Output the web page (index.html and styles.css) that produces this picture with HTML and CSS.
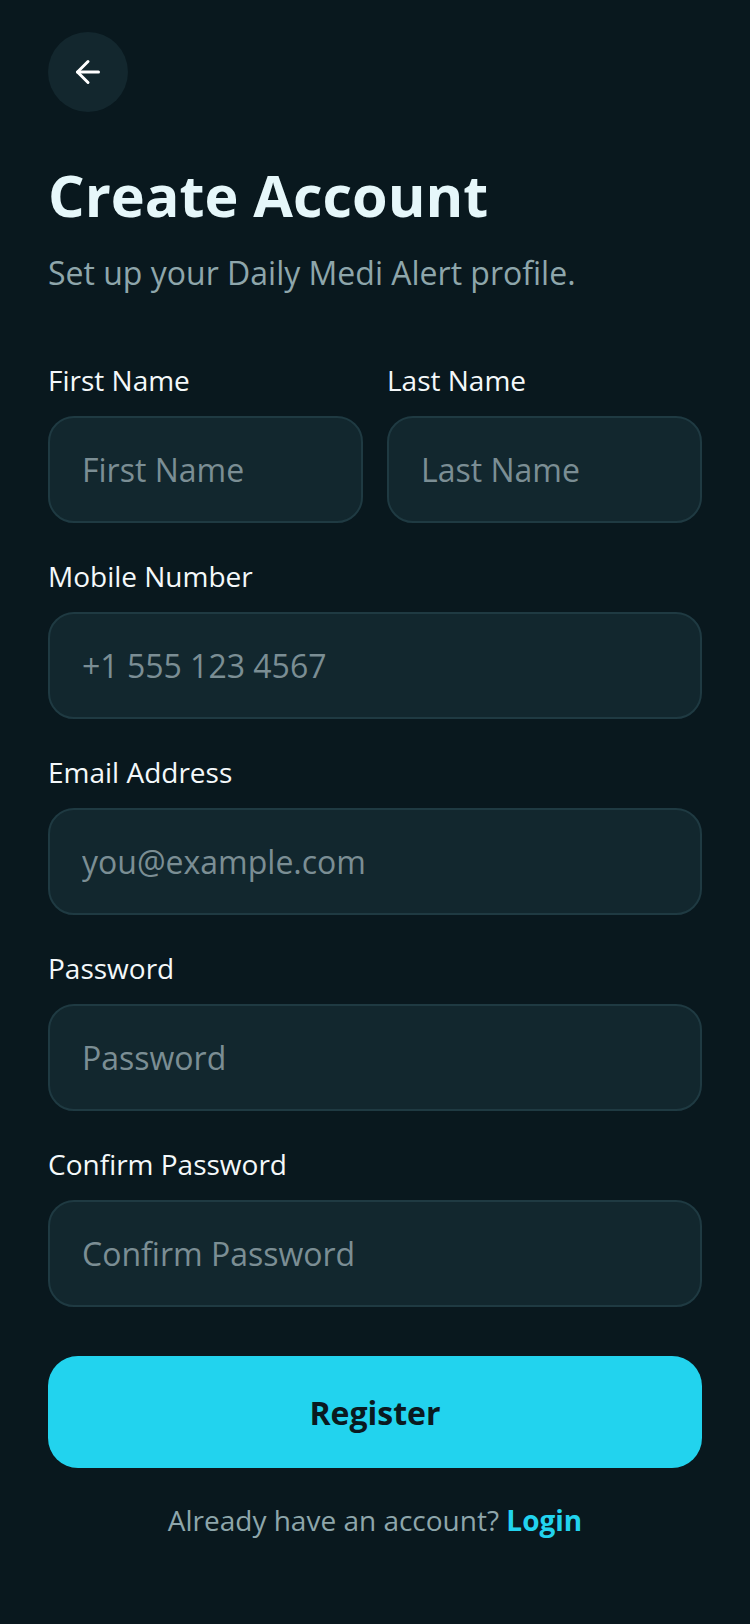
FILE: index.html
```html
<!DOCTYPE html>
<html lang="en">

<head>
  <meta charset="UTF-8">
  <meta name="viewport" content="width=device-width, initial-scale=1.0">
  <title>Create Account</title>

  <link rel="stylesheet" href="styles.css">
</head>

<body>
  <div id="register-page">
    <button class="back-btn" aria-label="Back">
      <svg width="36" height="36" viewBox="0 0 24 24" fill="none" stroke="#ffffff" stroke-width="2" stroke-linecap="round" stroke-linejoin="round">
        <path d="M19 12H5"></path>
        <path d="M12 19l-7-7 7-7"></path>
      </svg>
    </button>

    <h1>Create Account</h1>
    <p class="subtitle">Set up your Daily Medi Alert profile.</p>

    <form id="register-form">
      <div class="row">
        <div class="field">
          <label for="first-name">First Name</label>
          <input type="text" id="first-name" placeholder="First Name">
        </div>
        <div class="field">
          <label for="last-name">Last Name</label>
          <input type="text" id="last-name" placeholder="Last Name">
        </div>
      </div>

      <div class="field">
        <label for="mobile">Mobile Number</label>
        <input type="tel" id="mobile" placeholder="+1 555 123 4567">
      </div>

      <div class="field">
        <label for="email">Email Address</label>
        <input type="email" id="email" placeholder="you@example.com">
      </div>

      <div class="field">
        <label for="password">Password</label>
        <input type="password" id="password" placeholder="Password">
      </div>

      <div class="field">
        <label for="confirm-password">Confirm Password</label>
        <input type="password" id="confirm-password" placeholder="Confirm Password">
      </div>

      <button type="submit" class="register-btn">Register</button>
    </form>

    <p class="login-link">Already have an account? <a href="#">Login</a></p>
  </div>
</body>

</html>
```

FILE: styles.css
```css
body {
  margin: 0;
  font-family: 'Open Sans', 'Noto Sans', sans-serif;
  background-color: #09181e;
  color: #f1f6f8;
}

#register-page {
  padding: 32px 48px 40px;
}

.back-btn {
  width: 80px;
  height: 80px;
  border: none;
  border-radius: 50%;
  background-color: #13272e;
  display: flex;
  align-items: center;
  justify-content: center;
  padding: 0;
  cursor: pointer;
}

h1 {
  font-size: 57.5px;
  font-weight: 700;
  line-height: 70px;
  color: #e6f7fa;
  margin: 48px 0 0;
}

.subtitle {
  font-size: 32px;
  line-height: 42px;
  color: #8ea6ab;
  margin: 22px 0 0;
}

#register-form {
  margin-top: 68px;
  display: flex;
  flex-direction: column;
  gap: 35px;
}

.row {
  display: flex;
  gap: 24px;
}

.row .field {
  flex: 1;
  min-width: 0;
}

.field {
  display: flex;
  flex-direction: column;
  gap: 18px;
}

label {
  font-size: 28px;
  line-height: 36px;
  color: #f4f8fa;
}

input {
  box-sizing: border-box;
  width: 100%;
  height: 107px;
  padding: 0 32px;
  font-family: inherit;
  font-size: 32px;
  color: #e6f0f2;
  background-color: #12272e;
  border: 2px solid #1f3a42;
  border-radius: 26px;
  outline: none;
}

input::placeholder {
  color: #7b8e94;
}

.register-btn {
  margin-top: 14px;
  height: 112px;
  border: none;
  border-radius: 30px;
  background-color: #22d3ee;
  color: #0a1a20;
  font-family: inherit;
  font-size: 32px;
  font-weight: 700;
  cursor: pointer;
}

.login-link {
  text-align: center;
  font-size: 28px;
  line-height: 1.4;
  color: #8ea6ab;
  margin: 33px 0 0;
}

.login-link a {
  color: #22d3ee;
  font-weight: 700;
  text-decoration: none;
}
```
